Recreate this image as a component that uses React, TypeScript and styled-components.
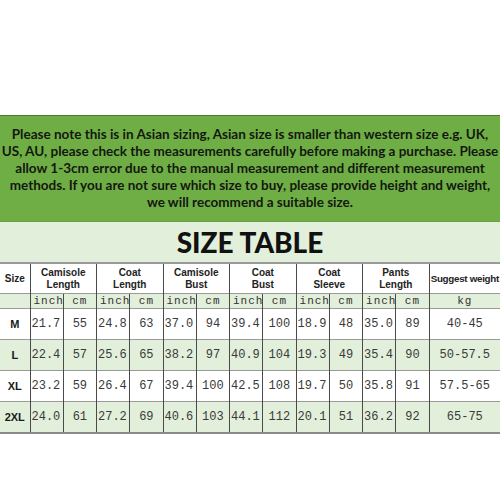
import React from "react";
import styled, { createGlobalStyle } from "styled-components";

const GlobalStyle = createGlobalStyle`
  html, body {
    margin: 0;
    padding: 0;
    background: #ffffff;
  }
`;

const LIGHT = "#e2efda";
const GRID = "#4a4a4a";

const StyledPage = styled.div`
  width: 500px;
  height: 500px;
  display: flex;
  flex-direction: column;
  background: #ffffff;
  overflow: hidden;
`;

const StyledSpacer = styled.div<{ $h: number }>`
  height: ${(p) => p.$h}px;
  flex-shrink: 0;
`;

const StyledNotice = styled.div`
  height: 105px;
  flex-shrink: 0;
  background: #6fae45;
  border-top: 1px solid #4a7a2e;
  border-bottom: 1px solid #6a9e48;
  display: flex;
  flex-direction: column;
  align-items: center;
  justify-content: center;
  color: #141811;
  font-family: Lato, "Liberation Sans", sans-serif;
  font-weight: 700;
  font-size: 13.5px;
  line-height: 17px;
`;

const StyledLine = styled.div`
  white-space: nowrap;
  text-align: center;
`;

const StyledTitle = styled.div`
  height: 40px;
  flex-shrink: 0;
  background: ${LIGHT};
  display: flex;
  align-items: center;
  justify-content: center;
  font-family: Lato, "Liberation Sans", sans-serif;
  font-weight: 900;
  font-size: 28px;
  color: #111111;
  border-bottom: 1px solid #9a9a9a;
`;

const StyledTable = styled.table`
  width: 500px;
  table-layout: fixed;
  border-collapse: collapse;
  border-bottom: 2px solid #8a8a8a;
`;

const StyledRow = styled.tr<{ $shade?: boolean; $h: number }>`
  height: ${(p) => p.$h}px;
  background: ${(p) => (p.$shade ? LIGHT : "#ffffff")};
  & > td,
  & > th {
    border-top: 1px solid #9a9a9a;
  }
`;

const StyledHead = styled.th<{ $tight?: boolean }>`
  padding: 0;
  border-left: 1px solid ${GRID};
  font-family: "Liberation Sans", Arial, sans-serif;
  font-weight: 700;
  font-size: ${(p) => (p.$tight ? 9.8 : 10)}px;
  letter-spacing: ${(p) => (p.$tight ? -0.3 : 0)}px;
  line-height: 12px;
  color: #222222;
  text-align: center;
  vertical-align: middle;
  white-space: nowrap;
  &:first-child {
    border-left: none;
  }
`;

const StyledUnit = styled.td<{ $left?: boolean }>`
  padding: 0 0 0 ${(p) => (p.$left ? 3 : 0)}px;
  border-left: 1px solid ${GRID};
  font-family: "Liberation Mono", monospace;
  font-size: 11px;
  letter-spacing: 1px;
  color: #333333;
  text-align: ${(p) => (p.$left ? "left" : "center")};
  vertical-align: middle;
`;

const StyledSize = styled.td`
  padding: 0;
  font-family: "Liberation Sans", Arial, sans-serif;
  font-weight: 700;
  font-size: 11px;
  color: #1a1a1a;
  text-align: center;
  vertical-align: middle;
`;

const StyledValue = styled.td<{ $left?: boolean }>`
  padding: 0 0 0 ${(p) => (p.$left ? 1 : 0)}px;
  border-left: 1px solid ${GRID};
  font-family: "Liberation Mono", monospace;
  font-size: 12px;
  color: #3a3a3a;
  text-align: ${(p) => (p.$left ? "left" : "center")};
  vertical-align: middle;
  white-space: nowrap;
`;

const noticeLines = [
  "Please note this is in Asian sizing, Asian size is smaller than western size e.g. UK,",
  "US, AU, please check the measurements carefully before making a purchase. Please",
  "allow 1-3cm error due to the manual measurement and different measurement",
  "methods. If you are not sure which size to buy, please provide height and weight,",
  "we will recommend a suitable size.",
];

const groups: [string, string][] = [
  ["Camisole", "Length"],
  ["Coat", "Length"],
  ["Camisole", "Bust"],
  ["Coat", "Bust"],
  ["Coat", "Sleeve"],
  ["Pants", "Length"],
];

const rows: { size: string; values: string[]; weight: string }[] = [
  { size: "M", values: ["21.7", "55", "24.8", "63", "37.0", "94", "39.4", "100", "18.9", "48", "35.0", "89"], weight: "40-45" },
  { size: "L", values: ["22.4", "57", "25.6", "65", "38.2", "97", "40.9", "104", "19.3", "49", "35.4", "90"], weight: "50-57.5" },
  { size: "XL", values: ["23.2", "59", "26.4", "67", "39.4", "100", "42.5", "108", "19.7", "50", "35.8", "91"], weight: "57.5-65" },
  { size: "2XL", values: ["24.0", "61", "27.2", "69", "40.6", "103", "44.1", "112", "20.1", "51", "36.2", "92"], weight: "65-75" },
];

const SizeTable: React.FC = () => (
  <StyledTable>
    <colgroup>
      <col style={{ width: 30 }} />
      {Array.from({ length: 12 }).map((_, i) => (
        <col key={i} style={{ width: 33.25 }} />
      ))}
      <col style={{ width: 71 }} />
    </colgroup>
    <tbody>
      <StyledRow $h={30}>
        <StyledHead>Size</StyledHead>
        {groups.map(([a, b], i) => (
          <StyledHead key={i} colSpan={2}>
            {a}
            <br />
            {b}
          </StyledHead>
        ))}
        <StyledHead $tight>Suggest weight</StyledHead>
      </StyledRow>
      <StyledRow $h={15} $shade>
        <StyledSize />
        {groups.map((_, i) => (
          <React.Fragment key={i}>
            <StyledUnit $left>inch</StyledUnit>
            <StyledUnit>cm</StyledUnit>
          </React.Fragment>
        ))}
        <StyledUnit>kg</StyledUnit>
      </StyledRow>
      {rows.map((r, ri) => (
        <StyledRow key={r.size} $h={31} $shade={ri % 2 === 1}>
          <StyledSize>{r.size}</StyledSize>
          {r.values.map((v, i) => (
            <StyledValue key={i} $left={i % 2 === 0}>
              {v}
            </StyledValue>
          ))}
          <StyledValue>{r.weight}</StyledValue>
        </StyledRow>
      ))}
    </tbody>
  </StyledTable>
);

export default function App() {
  return (
    <>
      <GlobalStyle />
      <StyledPage>
        <StyledSpacer $h={115} />
        <StyledNotice>
          {noticeLines.map((l) => (
            <StyledLine key={l}>{l}</StyledLine>
          ))}
        </StyledNotice>
        <StyledTitle>SIZE TABLE</StyledTitle>
        <SizeTable />
      </StyledPage>
    </>
  );
}
